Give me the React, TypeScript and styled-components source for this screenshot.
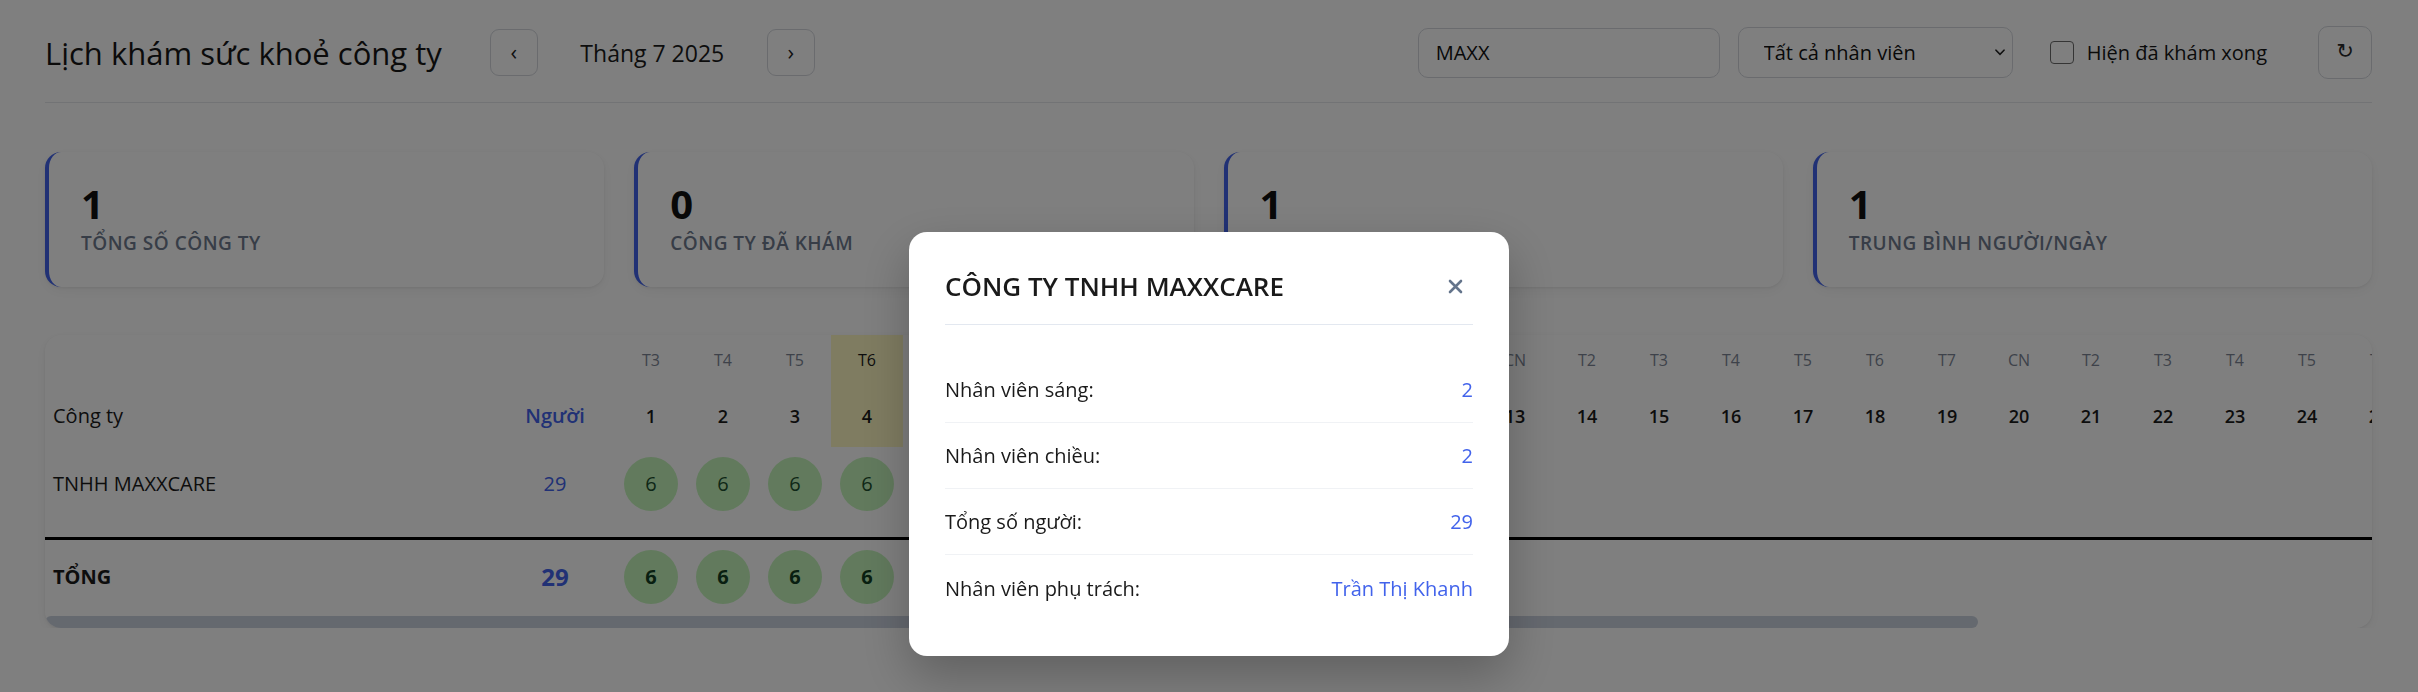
import React, { useLayoutEffect, useRef, useState } from 'react';
import styled, { createGlobalStyle } from 'styled-components';

const BLUE = '#4263eb';
const TODAY = 4;

const GlobalStyle = createGlobalStyle`
  html, body {
    margin: 0;
    padding: 0;
    background: #ffffff;
    overflow: hidden;
  }
  body {
    font-family: 'Open Sans', 'Noto Sans', sans-serif;
    color: #1f2937;
  }
  * {
    box-sizing: border-box;
  }
`;

const weekdays = ['CN', 'T2', 'T3', 'T4', 'T5', 'T6', 'T7'];
const days = Array.from({ length: 31 }, (_, i) => i + 1);
const weekdayOf = (d: number) => weekdays[new Date(2025, 6, d).getDay()];

// số người khám theo ngày của công ty đang chọn
const schedule: Record<number, number> = { 1: 6, 2: 6, 3: 6, 4: 6, 7: 5 };

const details = [
  { label: 'Nhân viên sáng:', value: '2' },
  { label: 'Nhân viên chiều:', value: '2' },
  { label: 'Tổng số người:', value: '29' },
  { label: 'Nhân viên phụ trách:', value: 'Trần Thị Khanh' },
];

const stats = [
  { value: 1, label: 'Tổng số công ty' },
  { value: 0, label: 'Công ty đã khám' },
  { value: 1, label: 'Lịch hẹn' },
  { value: 1, label: 'Trung bình người/ngày' },
];

const App: React.FC = () => {
  const scrollerRef = useRef<HTMLDivElement>(null);
  const [thumb, setThumb] = useState(100);

  // headless browser hides native scrollbars, so the bar is drawn by hand
  useLayoutEffect(() => {
    const el = scrollerRef.current;
    if (el) setThumb((el.clientWidth / el.scrollWidth) * 100);
  }, []);

  return (
    <>
      <GlobalStyle />
      <Page>
        <Header>
          <HeaderGroup>
            <Title>Lịch khám sức khoẻ công ty</Title>
            <NavButton>‹</NavButton>
            <MonthLabel>Tháng 7 2025</MonthLabel>
            <NavButton>›</NavButton>
          </HeaderGroup>
          <HeaderGroup>
            <SearchInput defaultValue="MAXX" />
            <SelectWrap>
              <Select defaultValue="all">
                <option value="all">Tất cả nhân viên</option>
              </Select>
              <Chevron width="10" height="7" viewBox="0 0 10 7">
                <path d="M1 1.2 L5 5.4 L9 1.2" fill="none" stroke="#222" strokeWidth="1.6" strokeLinecap="round" />
              </Chevron>
            </SelectWrap>
            <CheckLabel>
              <CheckBox type="checkbox" />
              Hiện đã khám xong
            </CheckLabel>
            <RefreshButton>↻</RefreshButton>
          </HeaderGroup>
        </Header>

        <StatGrid>
          {stats.map((s) => (
            <StatCard key={s.label}>
              <StatValue>{s.value}</StatValue>
              <StatLabel>{s.label}</StatLabel>
            </StatCard>
          ))}
        </StatGrid>

        <TableCard>
          <Scroller ref={scrollerRef}>
            <Table>
              <thead>
                <tr>
                  <HeadCell $w={450} $h={50} />
                  <HeadCell $w={120} $h={50} />
                  {days.map((d) => (
                    <HeadCell key={d} $w={72} $h={50} $today={d === TODAY} $muted>
                      {weekdayOf(d)}
                    </HeadCell>
                  ))}
                </tr>
                <tr>
                  <HeadCell $h={62} $align="left">Công ty</HeadCell>
                  <HeadCell $h={62} $blue>Người</HeadCell>
                  {days.map((d) => (
                    <HeadCell key={d} $h={62} $today={d === TODAY} $bold>
                      {d}
                    </HeadCell>
                  ))}
                </tr>
              </thead>
              <tbody>
                <tr>
                  <BodyCell $align="left">TNHH MAXXCARE</BodyCell>
                  <BodyCell><People>29</People></BodyCell>
                  {days.map((d) => (
                    <BodyCell key={d}>
                      {schedule[d] ? <Circle>{schedule[d]}</Circle> : null}
                    </BodyCell>
                  ))}
                </tr>
                <tr>
                  <BodyCell $total $align="left"><strong>TỔNG</strong></BodyCell>
                  <BodyCell $total><People $total>29</People></BodyCell>
                  {days.map((d) => (
                    <BodyCell key={d} $total>
                      {schedule[d] ? <Circle $strong>{schedule[d]}</Circle> : null}
                    </BodyCell>
                  ))}
                </tr>
              </tbody>
            </Table>
          </Scroller>
          <ScrollTrack>
            <ScrollThumb style={{ width: `${thumb}%` }} />
          </ScrollTrack>
        </TableCard>
      </Page>

      <Overlay>
        <Modal>
          <ModalHeader>
            <ModalTitle>CÔNG TY TNHH MAXXCARE</ModalTitle>
            <CloseButton aria-label="Đóng">
              <svg width="15" height="15" viewBox="0 0 15 15">
                <path d="M2 2 L13 13 M13 2 L2 13" stroke="#64748b" strokeWidth="2.6" strokeLinecap="round" />
              </svg>
            </CloseButton>
          </ModalHeader>
          <ModalBody>
            {details.map((r) => (
              <InfoRow key={r.label}>
                <span>{r.label}</span>
                <InfoValue>{r.value}</InfoValue>
              </InfoRow>
            ))}
          </ModalBody>
        </Modal>
      </Overlay>
    </>
  );
};

export default App;

const Page = styled.div`
  padding: 0 46px 0 45px;
`;

const Header = styled.header`
  display: flex;
  align-items: center;
  justify-content: space-between;
  padding: 26px 0 23px;
  border-bottom: 1px solid #e5e7eb;
`;

const HeaderGroup = styled.div`
  display: flex;
  align-items: center;
`;

const Title = styled.h1`
  margin: 3px 48px 0 0;
  font-size: 31px;
  font-weight: 500;
  color: #161616;
  line-height: 1.2;
`;

const NavButton = styled.button`
  width: 48px;
  height: 47px;
  border: 1px solid #d4d7dd;
  border-radius: 9px;
  background: #fff;
  font-family: inherit;
  font-size: 22px;
  line-height: 1;
  color: #222;
  padding: 0 0 4px;
  cursor: pointer;
`;

const MonthLabel = styled.div`
  width: 229px;
  text-align: center;
  font-size: 23px;
  font-weight: 500;
  color: #1a1a1a;
`;

const SearchInput = styled.input`
  width: 302px;
  height: 50px;
  border: 1px solid #d4d7dd;
  border-radius: 10px;
  padding: 0 17px;
  font-family: inherit;
  font-size: 20px;
  color: #111;
  outline: none;
`;

const SelectWrap = styled.div`
  position: relative;
  margin-left: 18px;
`;

const Select = styled.select`
  appearance: none;
  width: 275px;
  height: 51px;
  border: 1px solid #d4d7dd;
  border-radius: 10px;
  padding: 0 30px 0 25px;
  background: #fff;
  font-family: inherit;
  font-size: 20px;
  color: #111;
`;

const Chevron = styled.svg`
  position: absolute;
  right: 8px;
  top: 22px;
  pointer-events: none;
`;

const CheckLabel = styled.label`
  display: flex;
  align-items: center;
  gap: 13px;
  margin-left: 37px;
  font-size: 20px;
  font-weight: 500;
  color: #161616;
`;

const CheckBox = styled.input`
  appearance: none;
  margin: 0;
  width: 24px;
  height: 23px;
  border: 1.5px solid #6b6b6b;
  border-radius: 4px;
  background: #fff;
`;

const RefreshButton = styled.button`
  margin-left: 51px;
  width: 54px;
  height: 53px;
  border: 1px solid #d4d7dd;
  border-radius: 10px;
  background: #fff;
  font-family: 'DejaVu Sans', sans-serif;
  font-size: 21px;
  line-height: 1;
  color: #2a2a2a;
  padding: 0 0 2px;
  cursor: pointer;
`;

const StatGrid = styled.div`
  display: grid;
  grid-template-columns: repeat(4, 1fr);
  gap: 30px;
  margin-top: 49px;
`;

const StatCard = styled.div`
  background: #fff;
  border-radius: 16px;
  border-left: 4px solid ${BLUE};
  padding: 28px 32px 30px;
  box-shadow: 0 1px 3px rgba(0, 0, 0, 0.07), 0 4px 14px rgba(0, 0, 0, 0.05);
`;

const StatValue = styled.div`
  font-size: 40px;
  font-weight: 700;
  line-height: 48px;
  color: #111;
  margin-bottom: 2px;
`;

const StatLabel = styled.div`
  font-size: 19px;
  font-weight: 600;
  line-height: 1.4;
  letter-spacing: 0.5px;
  text-transform: uppercase;
  color: #6f7a8e;
`;

const TableCard = styled.div`
  margin-top: 48px;
  background: #fff;
  border-radius: 16px;
  box-shadow: 0 1px 3px rgba(0, 0, 0, 0.07), 0 4px 14px rgba(0, 0, 0, 0.05);
  overflow: hidden;
`;

const Scroller = styled.div`
  overflow-x: auto;
  scrollbar-width: none;
`;

const ScrollTrack = styled.div`
  height: 12px;
  background: transparent;
`;

const ScrollThumb = styled.div`
  height: 100%;
  background: #cbd2df;
  border-radius: 6px;
`;

const Table = styled.table`
  width: 2802px;
  table-layout: fixed;
  border-collapse: collapse;
`;

const HeadCell = styled.th<{
  $w?: number;
  $h: number;
  $today?: boolean;
  $muted?: boolean;
  $bold?: boolean;
  $blue?: boolean;
  $align?: 'left' | 'center';
}>`
  width: ${(p) => (p.$w ? `${p.$w}px` : 'auto')};
  height: ${(p) => p.$h}px;
  padding: 0 0 0 ${(p) => (p.$align === 'left' ? '8px' : '0')};
  text-align: ${(p) => p.$align || 'center'};
  vertical-align: middle;
  background: ${(p) => (p.$today ? '#fef9c3' : 'transparent')};
  font-size: ${(p) => (p.$muted ? '16px' : p.$bold ? '18px' : '20px')};
  font-weight: ${(p) => (p.$blue ? 600 : p.$bold ? 600 : 400)};
  color: ${(p) => (p.$blue ? BLUE : p.$muted && !p.$today ? '#7c8595' : '#1a1a1a')};
  white-space: nowrap;
`;

const BodyCell = styled.td<{ $total?: boolean; $align?: 'left' | 'center' }>`
  padding: ${(p) => (p.$total ? '10px 0 10px' : '10px 0 26px')};
  padding-left: ${(p) => (p.$align === 'left' ? '8px' : '0')};
  border-top: ${(p) => (p.$total ? '3px solid #000' : 'none')};
  text-align: ${(p) => p.$align || 'center'};
  vertical-align: top;
  line-height: 54px;
  font-size: 20px;
  color: #1a1a1a;
  white-space: nowrap;

  strong {
    font-weight: 700;
  }
`;

const People = styled.span<{ $total?: boolean }>`
  color: ${BLUE};
  font-size: ${(p) => (p.$total ? '24px' : '20px')};
  font-weight: ${(p) => (p.$total ? 700 : 400)};
`;

const Circle = styled.span<{ $strong?: boolean }>`
  display: inline-flex;
  align-items: center;
  justify-content: center;
  width: 54px;
  height: 54px;
  border-radius: 50%;
  background: #c4f5bb;
  font-size: 20px;
  font-weight: ${(p) => (p.$strong ? 700 : 500)};
  color: ${(p) => (p.$strong ? '#123f22' : '#1d4f2e')};
  line-height: 1;
`;

const Overlay = styled.div`
  position: fixed;
  inset: 0;
  background: rgba(0, 0, 0, 0.5);
  display: flex;
  justify-content: center;
  align-items: flex-start;
  padding-top: 232px;
`;

const Modal = styled.div`
  width: 600px;
  background: #fff;
  border-radius: 18px;
  padding: 36px 36px 35px;
  box-shadow: 0 20px 50px rgba(0, 0, 0, 0.25);
`;

const ModalHeader = styled.div`
  display: flex;
  align-items: center;
  justify-content: space-between;
  padding-bottom: 20px;
  border-bottom: 1px solid #e3e8f0;
`;

const ModalTitle = styled.h2`
  margin: 0;
  font-size: 26px;
  font-weight: 600;
  line-height: 36px;
  color: #1a1a1a;
`;

const CloseButton = styled.button`
  width: 36px;
  height: 36px;
  display: flex;
  align-items: center;
  justify-content: center;
  border: none;
  background: none;
  padding: 0;
  cursor: pointer;
`;

const ModalBody = styled.div`
  margin-top: 32px;
`;

const InfoRow = styled.div`
  display: flex;
  align-items: center;
  justify-content: space-between;
  height: 66px;
  border-bottom: 1px solid #f0f2f5;
  font-size: 20px;
  font-weight: 500;
  color: #1a1a1a;

  &:last-child {
    border-bottom: none;
  }
`;

const InfoValue = styled.span`
  color: ${BLUE};
  font-weight: 500;
`;
